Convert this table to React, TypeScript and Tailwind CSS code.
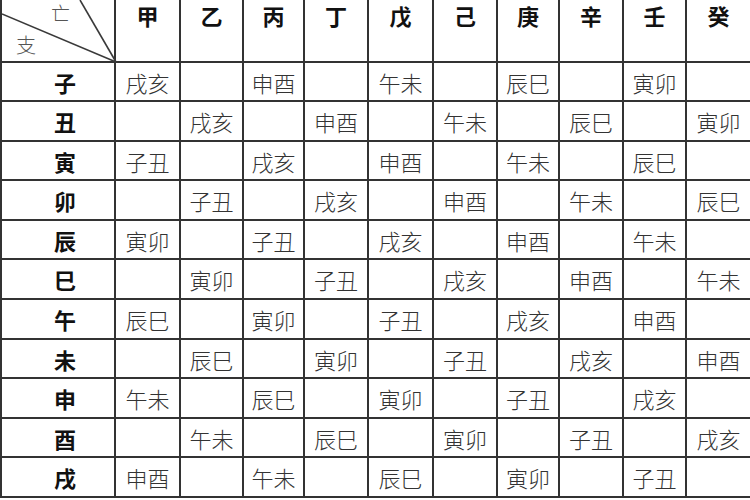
import React from "react";

const stems = ["甲", "乙", "丙", "丁", "戊", "己", "庚", "辛", "壬", "癸"];
const branches = ["子", "丑", "寅", "卯", "辰", "巳", "午", "未", "申", "酉", "戌"];
const pairs = ["戌亥", "申酉", "午未", "辰巳", "寅卯", "子丑"];

function voidFor(s: number, b: number): string {
  if ((s + b) % 2 !== 0) return "";
  const idx = (((s - b) / 2) % 6 + 6) % 6;
  return pairs[idx];
}

const rowHeights = [39, 40, 39, 40, 39, 40, 40, 39, 40, 39, 40];
const font = { fontFamily: '"Noto Sans CJK SC", "Noto Sans CJK JP", sans-serif' };

export default function App() {
  return (
    <div className="w-[750px] h-[500px] overflow-hidden bg-white" style={font}>
      <div className="grid grid-cols-[116px_65px_63px_61px_64px_65px_64px_62px_64px_63px_63px]">
        <div className="relative h-[63px] border-l-2 border-r-2 border-b-2 border-[#333]">
          <svg className="absolute left-0 top-0" width="116" height="63" viewBox="0 0 116 63">
            <line x1="114" y1="62" x2="78" y2="0" stroke="#3a3a3a" strokeWidth="1.6" />
            <line x1="114" y1="62" x2="0" y2="14" stroke="#3a3a3a" strokeWidth="1.6" />
          </svg>
          <span className="absolute left-[49px] top-[3px] text-[19px] leading-none font-light text-[#555]">亡</span>
          <span className="absolute left-[14px] top-[35px] text-[20px] leading-none font-light text-[#555]">支</span>
        </div>
        {stems.map((s, i) => (
          <div
            key={s}
            className={`h-[63px] flex justify-center pt-[4px] border-b-2 border-[#333] ${i < 9 ? "border-r-2" : ""}`}
          >
            <span className="text-[22px] leading-none font-bold text-[#111]">{s}</span>
          </div>
        ))}
        {branches.map((b, bi) => (
          <React.Fragment key={b}>
            <div
              className="flex items-center justify-center pl-[14px] border-l-2 border-r-2 border-b-2 border-[#333]"
              style={{ height: rowHeights[bi] }}
            >
              <span className="text-[22px] leading-none font-bold text-[#111]">{b}</span>
            </div>
            {stems.map((s, si) => (
              <div
                key={s}
                className={`flex items-center justify-center border-b-2 border-[#333] ${si < 9 ? "border-r-2" : ""}`}
                style={{ height: rowHeights[bi] }}
              >
                <span className="text-[22px] leading-none font-light text-[#333]">
                  {voidFor(si, bi)}
                </span>
              </div>
            ))}
          </React.Fragment>
        ))}
      </div>
    </div>
  );
}
